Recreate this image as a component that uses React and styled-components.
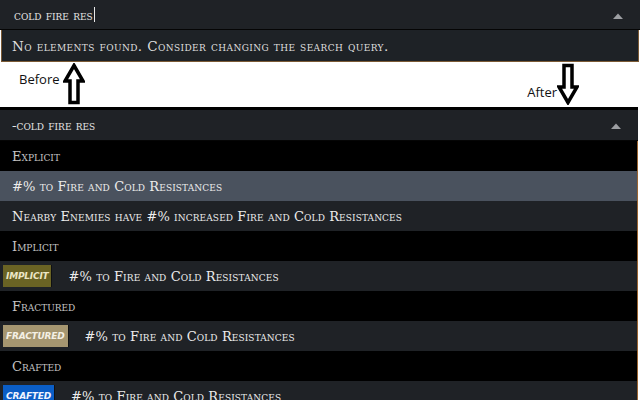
import styled, { createGlobalStyle } from 'styled-components';

const GlobalStyle = createGlobalStyle`
  html, body {
    margin: 0;
    padding: 0;
    background: #ffffff;
  }
  body {
    width: 640px;
    height: 400px;
    overflow: hidden;
  }
`;

const groups = [
  {
    label: 'Explicit',
    options: [
      { text: '#% to Fire and Cold Resistances', active: true },
      { text: 'Nearby Enemies have #% increased Fire and Cold Resistances' },
    ],
  },
  {
    label: 'Implicit',
    options: [{ text: '#% to Fire and Cold Resistances', badge: 'implicit' }],
  },
  {
    label: 'Fractured',
    options: [{ text: '#% to Fire and Cold Resistances', badge: 'fractured' }],
  },
  {
    label: 'Crafted',
    options: [{ text: '#% to Fire and Cold Resistances', badge: 'crafted' }],
  },
];

const badgeColors = {
  implicit: { bg: '#6a6324', fg: '#ece6c4' },
  fractured: { bg: '#a59670', fg: '#f4f0e4' },
  crafted: { bg: '#0b5ec6', fg: '#f0f4ff' },
};

function Toggle() {
  return (
    <ToggleIcon width="10" height="6" viewBox="0 0 10 6">
      <path d="M0 6 L5 0.5 L10 6 Z" fill="#9c9ea2" />
    </ToggleIcon>
  );
}

function Arrow({ down }) {
  // block arrow, outlined
  const d = 'M11 2.5 L20 18 L15 18 L15 39.5 L7 39.5 L7 18 L2 18 Z';
  return (
    <ArrowIcon width="22" height="42" viewBox="0 0 22 42" $down={down}>
      <path d={d} fill="#ffffff" stroke="#000000" strokeWidth="3.5" strokeLinejoin="miter" />
    </ArrowIcon>
  );
}

function App() {
  return (
    <>
      <GlobalStyle />
      <Page>
        <Panel>
          <SearchBar>
            <SearchText>cold fire res<Caret /></SearchText>
            <Toggle />
          </SearchBar>
          <Message>No elements found. Consider changing the search query.</Message>
        </Panel>

        <Notes>
          <Note>
            <NoteLabel>Before</NoteLabel>
            <Arrow />
          </Note>
          <Note $low>
            <NoteLabel>After</NoteLabel>
            <Arrow down />
          </Note>
        </Notes>

        <Panel $after>
          <SearchBar $tall>
            <SearchText>-cold fire res</SearchText>
            <Toggle />
          </SearchBar>
          <List>
            {groups.map((g) => (
              <div key={g.label}>
                <GroupLabel>{g.label}</GroupLabel>
                {g.options.map((o, i) => (
                  <Option key={i} $active={o.active}>
                    {o.badge && (
                      <Badge $bg={badgeColors[o.badge].bg} $fg={badgeColors[o.badge].fg}>
                        {o.badge}
                      </Badge>
                    )}
                    <OptionText>{o.text}</OptionText>
                  </Option>
                ))}
              </div>
            ))}
          </List>
        </Panel>
      </Page>
    </>
  );
}

export default App;

const Page = styled.div`
  width: 640px;
  height: 400px;
  overflow: hidden;
  display: flex;
  flex-direction: column;
  background: #ffffff;

  & > * {
    flex-shrink: 0;
  }
`;

const Panel = styled.div`
  display: flex;
  flex-direction: column;
  width: ${(p) => (p.$after ? '638px' : '640px')};
  border-top: ${(p) => (p.$after ? '3px solid #000000' : 'none')};
`;

const SearchBar = styled.div`
  height: ${(p) => (p.$tall ? '31px' : '30px')};
  flex-shrink: 0;
  background: #1f2226;
  border-bottom: 1px solid #050505;
  display: flex;
  align-items: center;
  justify-content: space-between;
  padding: 0 17px 0 ${(p) => (p.$tall ? '12px' : '14px')};
  box-sizing: border-box;
`;

const smallCaps = `
  font-family: "DejaVu Serif", "Liberation Serif", serif;
  font-variant: small-caps;
`;

const SearchText = styled.span`
  ${smallCaps}
  font-size: 13.5px;
  color: #e4e4e4;
  display: flex;
  align-items: center;
`;

const Caret = styled.span`
  display: inline-block;
  width: 1px;
  height: 15px;
  background: #e8e8e8;
  margin-left: 1px;
`;

const ToggleIcon = styled.svg`
  display: block;
  margin-top: 2px;
`;

const Message = styled.div`
  height: 31px;
  flex-shrink: 0;
  margin: 0 1px;
  background: #1e2226;
  border: 1px solid #7b5a35;
  border-top: none;
  display: flex;
  align-items: center;
  padding-left: 10px;
  ${smallCaps}
  font-size: 13.5px;
  letter-spacing: 0.4px;
  color: #dedede;
`;

const Notes = styled.div`
  height: 45px;
  display: flex;
  justify-content: space-between;
  padding: 2px 61px 0 19px;
  box-sizing: border-box;
`;

const Note = styled.div`
  display: flex;
  align-items: flex-start;
  gap: ${(p) => (p.$low ? '0' : '3px')};
  & > span {
    margin-top: ${(p) => (p.$low ? '19px' : '6px')};
  }
`;

const NoteLabel = styled.span`
  font-family: "Open Sans", sans-serif;
  font-size: 13px;
  color: #111111;
`;

const ArrowIcon = styled.svg`
  display: block;
  margin-top: -1px;
  transform: ${(p) => (p.$down ? 'rotate(180deg)' : 'none')};
`;

const List = styled.div`
  display: flex;
  flex-direction: column;
  border-right: 1px solid #9a6430;
`;

const GroupLabel = styled.div`
  height: 30px;
  background: #000000;
  display: flex;
  align-items: center;
  padding-left: 12px;
  ${smallCaps}
  font-size: 13px;
  color: #c4c4c4;
`;

const Option = styled.div`
  height: 30px;
  background: ${(p) => (p.$active ? '#4a525e' : '#1f2226')};
  display: flex;
  align-items: center;
  padding-left: 3px;
`;

const Badge = styled.span`
  height: 22px;
  background: ${(p) => p.$bg};
  box-shadow: 1px 0 0 rgba(0, 0, 0, 0.5);
  display: flex;
  align-items: center;
  padding: 0 3px;
  margin-right: 17px;
  font-family: "DejaVu Sans", sans-serif;
  font-style: italic;
  font-weight: bold;
  font-size: 9px;
  text-transform: uppercase;
  color: ${(p) => p.$fg};
  letter-spacing: -0.2px;
`;

const OptionText = styled.span`
  padding-left: 9px;
  ${Badge} + & {
    padding-left: 0;
  }
  ${smallCaps}
  font-size: 13px;
  letter-spacing: 0.1px;
  color: #ececec;
`;
